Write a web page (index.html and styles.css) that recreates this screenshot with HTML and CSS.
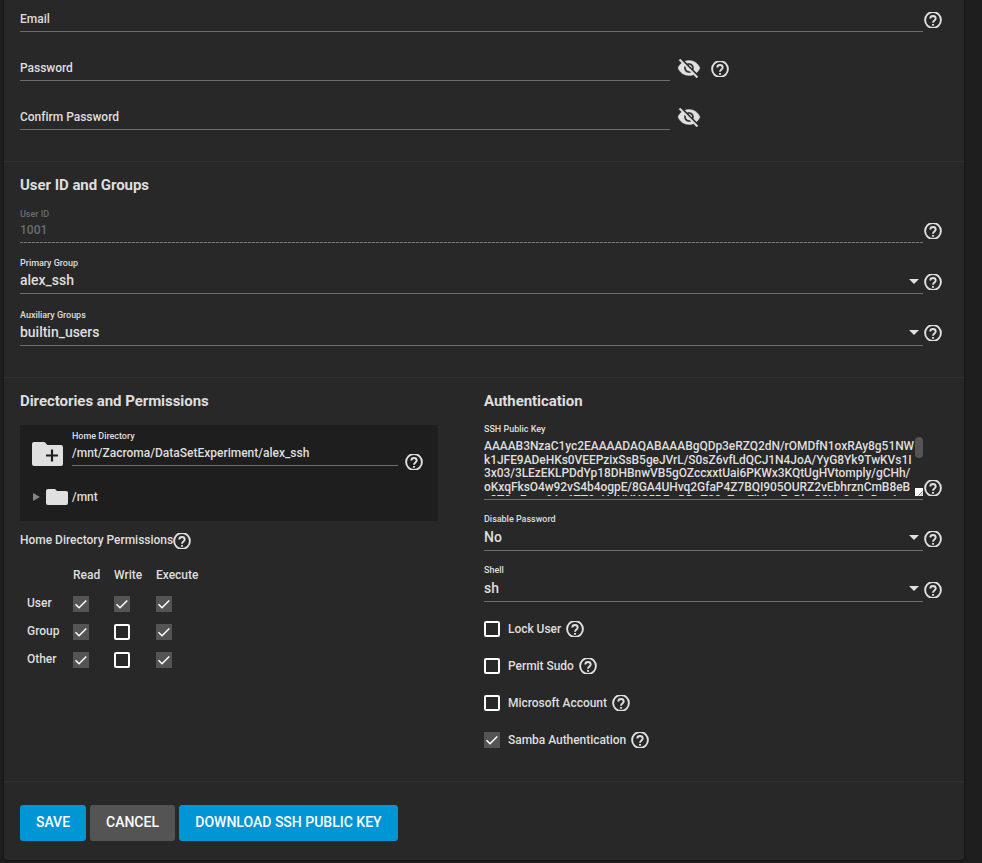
FILE: index.html
```html
<!DOCTYPE html>
<html lang="en">
<head>
<meta charset="utf-8">
<title>Edit User</title>
<link rel="stylesheet" href="styles.css">
</head>
<body>
<svg class="defs" aria-hidden="true">
  <symbol id="help" viewBox="0 0 18 16"><g fill="none" stroke="#e0e0e0" stroke-width="1.900"><circle cx="9" cy="8" r="7.900"/><path d="M6.300 6.500a2.700 2.500 0 0 1 5.400 0c0 1.900-2.700 2-2.700 4.300M9 11.900v1.800"/></g></symbol>
  <symbol id="hidden" viewBox="0 0 24 24"><path d="M12 7c2.760 0 5 2.240 5 5 0 .65-.13 1.260-.36 1.830l2.920 2.920c1.510-1.260 2.700-2.890 3.430-4.750-1.730-4.390-6-7.500-11-7.500-1.400 0-2.740.25-3.980.7l2.160 2.160C10.740 7.130 11.350 7 12 7zM2 4.270l2.280 2.280.46.46C3.080 8.300 1.780 10.020 1 12c1.730 4.390 6 7.500 11 7.500 1.550 0 3.030-.3 4.380-.84l.42.42L19.730 22 21 20.730 3.270 3 2 4.270zM7.530 9.800l1.550 1.550c-.05.21-.08.43-.08.65 0 1.660 1.340 3 3 3 .22 0 .44-.03.65-.08l1.550 1.550c-.67.33-1.410.53-2.200.53-2.760 0-5-2.240-5-5 0-.79.2-1.530.53-2.200zm4.310-.78l3.150 3.150.02-.16c0-1.660-1.340-3-3-3l-.17.010z" stroke="#e0e0e0" stroke-width=".4"/></symbol>
  <symbol id="check" viewBox="0 0 16 16"><path d="M2.500 8.300 6 11.800 13.300 4.500" fill="none" stroke="#fff" stroke-width="1.500"/></symbol>
</svg>
<main class="card">
  <section class="credentials">
    <div class="row email"><div class="field">Email</div><svg class="help"><use href="#help"/></svg></div>
    <div class="row secret"><div class="field">Password</div><svg class="eye"><use href="#hidden"/></svg><svg class="help"><use href="#help"/></svg></div>
    <div class="row secret"><div class="field">Confirm Password</div><svg class="eye"><use href="#hidden"/></svg></div>
  </section>

  <section class="groups">
    <h2>User ID and Groups</h2>
    <div class="row uid"><div class="field disabled"><label>User ID</label><span class="value">1001</span></div><svg class="help"><use href="#help"/></svg></div>
    <div class="row"><div class="field select"><label>Primary Group</label><span class="value">alex_ssh</span></div><svg class="help"><use href="#help"/></svg></div>
    <div class="row aux"><div class="field select"><label>Auxiliary Groups</label><span class="value">builtin_users</span></div><svg class="help"><use href="#help"/></svg></div>
  </section>

  <section class="columns">
    <div class="directories">
      <h2>Directories and Permissions</h2>
      <div class="explorer">
        <div class="home">
          <svg class="folder-add" viewBox="0 0 31 24"><path d="M2 0h10.500l3 3H29a2 2 0 0 1 2 2v17a2 2 0 0 1-2 2H2a2 2 0 0 1-2-2V2a2 2 0 0 1 2-2z" fill="#e0e0e0"/><path d="M20 7.500v12M14 13.500h12" stroke="#1e1e1e" stroke-width="2.200"/></svg>
          <div class="path"><label>Home Directory</label><span>/mnt/Zacroma/DataSetExperiment/alex_ssh</span></div>
          <svg class="help"><use href="#help"/></svg>
        </div>
        <div class="node">
          <svg class="expand" viewBox="0 0 7 8"><path d="M0 0l7 4-7 4z" fill="#858585"/></svg>
          <svg class="folder" viewBox="0 0 22 16"><path d="M2 0h7l2 2h9a2 2 0 0 1 2 2v10a2 2 0 0 1-2 2H2a2 2 0 0 1-2-2V2a2 2 0 0 1 2-2z" fill="#e0e0e0"/></svg>
          <span>/mnt</span>
        </div>
      </div>
      <div class="perm-title"><span>Home Directory Permissions</span><svg class="help"><use href="#help"/></svg></div>
      <div class="perms">
        <span></span><span>Read</span><span>Write</span><span>Execute</span>
        <b>User</b><i class="box on"><svg><use href="#check"/></svg></i><i class="box on"><svg><use href="#check"/></svg></i><i class="box on"><svg><use href="#check"/></svg></i>
        <b>Group</b><i class="box on"><svg><use href="#check"/></svg></i><i class="box"></i><i class="box on"><svg><use href="#check"/></svg></i>
        <b>Other</b><i class="box on"><svg><use href="#check"/></svg></i><i class="box"></i><i class="box on"><svg><use href="#check"/></svg></i>
      </div>
    </div>
    <div class="auth">
      <h2>Authentication</h2>
      <div class="row key"><div class="field"><label>SSH Public Key</label>
        <div class="keybox"><div class="keytext"><div>AAAAB3NzaC1yc2EAAAADAQABAAABgQDp3eRZQ2dN/rOMDfN1oxRAy8g51NW</div><div>k1JFE9ADeHKs0VEEPzixSsB5geJVrL/S0sZ6vfLdQCJ1N4JoA/YyG8Yk9TwKVs1I</div><div>3x03/3LEzEKLPDdYp18DHBnwVB5gOZccxxtUai6PKWx3KQtUgHVtomply/gCHh/</div><div>oKxqFksO4w92vS4b4ogpE/8GA4UHvq2GfaP4Z7BQI905OURZ2vEbhrznCmB8eB</div><div>c3T0wEoca0Ac6TT0eHdNVNS5DEwDDoT80xZxoFiXkvrEoDhc3SHs8oGsDaxA</div></div>
        <div class="scroll"><span class="thumb"></span><svg class="grip" viewBox="0 0 8 8"><path d="M0 0h8v8H0z" fill="#fff"/><path d="M3.500 7.500l4-4M6 7.500l1.500-1.500" stroke="#444" stroke-width=".8"/></svg></div></div>
      </div><svg class="help"><use href="#help"/></svg></div>
      <div class="row"><div class="field select"><label>Disable Password</label><span class="value">No</span></div><svg class="help"><use href="#help"/></svg></div>
      <div class="row"><div class="field select"><label>Shell</label><span class="value">sh</span></div><svg class="help"><use href="#help"/></svg></div>
      <div class="options">
        <div class="option"><i class="box"></i><span>Lock User</span><svg class="help"><use href="#help"/></svg></div>
        <div class="option"><i class="box"></i><span>Permit Sudo</span><svg class="help"><use href="#help"/></svg></div>
        <div class="option"><i class="box"></i><span>Microsoft Account</span><svg class="help"><use href="#help"/></svg></div>
        <div class="option"><i class="box on"><svg><use href="#check"/></svg></i><span>Samba Authentication</span><svg class="help"><use href="#help"/></svg></div>
      </div>
    </div>
  </section>

  <footer>
    <button class="primary save">SAVE</button>
    <button class="cancel">CANCEL</button>
    <button class="primary download">DOWNLOAD SSH PUBLIC KEY</button>
  </footer>
</main>
</body>
</html>
```
FILE: styles.css
```css
* { box-sizing: border-box; }
body { margin: 0; height: 863px; overflow: hidden; background: #1e1e1e; color: #dedede; font: 500 12px/16px Roboto, sans-serif; letter-spacing: -.02px; }
.defs { display: none; }
svg { display: block; flex: none; }
.card { width: 960px; height: 860px; margin-left: 4px; background: #282828; border-radius: 0 0 4px 4px; box-shadow: 0 1px 3px rgba(0, 0, 0, .4); }
section { padding: 0 22px 0 16px; border-bottom: 1px solid #303030; }
h2 { margin: 0; padding-top: 14px; height: 32px; font-size: 15px; line-height: 18px; font-weight: 700; letter-spacing: -.05px; }
.help { width: 18px; height: 16px; margin-left: 1px; }
.eye { width: 24px; height: 24px; fill: #e0e0e0; }

.row { display: flex; align-items: flex-end; height: 51px; }
.row > .help { margin-bottom: 4px; }
.field { position: relative; flex: 1; height: 100%; border-bottom: 1px solid #6e6e6e; }
label { display: block; font-size: 9px; line-height: 12px; }
.value { display: block; font-size: 14px; line-height: 18px; }

.credentials { height: 162px; }
.credentials .field { display: flex; align-items: flex-end; padding-bottom: 4px; }
.credentials .email { height: 32px; }
.secret { height: 49px; }
.secret .field { flex: none; width: 650px; }
.secret .eye { margin: 0 0 1px 7px; }
.secret .help { margin-left: 9.500px; }

.groups { height: 216px; }
.row > .field > label { padding-top: 14px; height: 26px; }
.row > .field > .value { margin-top: 2px; }
.uid { height: 49px; }
.row.aux { height: 52px; }
.aux > .help { margin-bottom: 5px; }
.row.aux > .field > label { padding-top: 15px; }
.row.aux > .field > .value { margin-top: 3px; }
.disabled { color: #6c6c6c; border-bottom: 0; background: repeating-linear-gradient(90deg, #757575 0 3px, #424242 3px 4px) 0 100% / 100% 1px no-repeat; }
.disabled .value { font-size: 12px; line-height: 16px; letter-spacing: 0; }
.select::after { content: ""; position: absolute; right: 4px; bottom: 9px; border: 5px solid transparent; border-top-color: #e0e0e0; border-bottom: 0; }
.aux .select::after { bottom: 10px; }

.columns { height: 404px; display: grid; grid-template-columns: 418px 458px; column-gap: 46px; }
.explorer { height: 96px; margin-top: 15px; background: #1e1e1e; }
.home { display: flex; height: 41px; padding: 5px 15px 0 12px; }
.folder-add { width: 31px; height: 24px; margin-top: 12px; }
.path { width: 326px; height: 36px; margin-left: 9px; border-bottom: 1px solid #6e6e6e; }
.path span { display: block; margin-top: 3px; letter-spacing: 0; }
.home .help { margin: 24px 0 0 6.500px; }
.node { display: flex; align-items: center; height: 16px; margin-top: 23px; padding-left: 13px; }
.expand { width: 7px; height: 8px; }
.folder { width: 22px; height: 16px; margin: 0 4px 0 6px; }
.perm-title { display: flex; margin-top: 11px; height: 17px; }
.perm-title .help { margin: 1px 0 0; }
.perms { display: grid; grid-template-columns: 46px 41px 42px 50px; grid-template-rows: 29px 28px 28px 28px; margin: 18px 0 0 7px; }
.perms b { font-weight: 500; margin-top: -1px; }
.box { display: block; flex: none; width: 16px; height: 16px; border: 2px solid #fff; border-radius: 2px; }
.box.on { border: 0; background: #545454; border-radius: 0; }
.box svg { width: 16px; height: 16px; }

.row.key { height: 90px; }
.auth .row > .field > label { padding-top: 13px; }
.row.key > .field > label { height: 27px; }
.auth .select::after { bottom: 10px; }
.keybox { display: flex; height: 59px; overflow: hidden; }
.keytext { width: 431px; line-height: 13.500px; white-space: nowrap; padding-top: 3px; letter-spacing: -.055px; }
.scroll { width: 8px; display: flex; flex-direction: column; justify-content: space-between; }
.thumb { height: 21px; border-radius: 4px; background: #555; }
.grip { width: 8px; height: 8px; }
.options { padding-top: 19px; }
.option { display: flex; align-items: center; height: 16px; margin-bottom: 21px; }
.option span { margin: 0 4px 0 8px; letter-spacing: -.04px; }

footer { display: flex; gap: 4px; padding: 23px 16px 0; }
button { height: 36px; padding: 0 0 2px; border: 0; border-radius: 3px; color: #fff; font: 500 14px/34px Roboto, sans-serif; }
.primary { background: #0095d5; }
.cancel { width: 85px; background: #545454; }
.save { width: 66px; }
.download { width: 219px; }
```
